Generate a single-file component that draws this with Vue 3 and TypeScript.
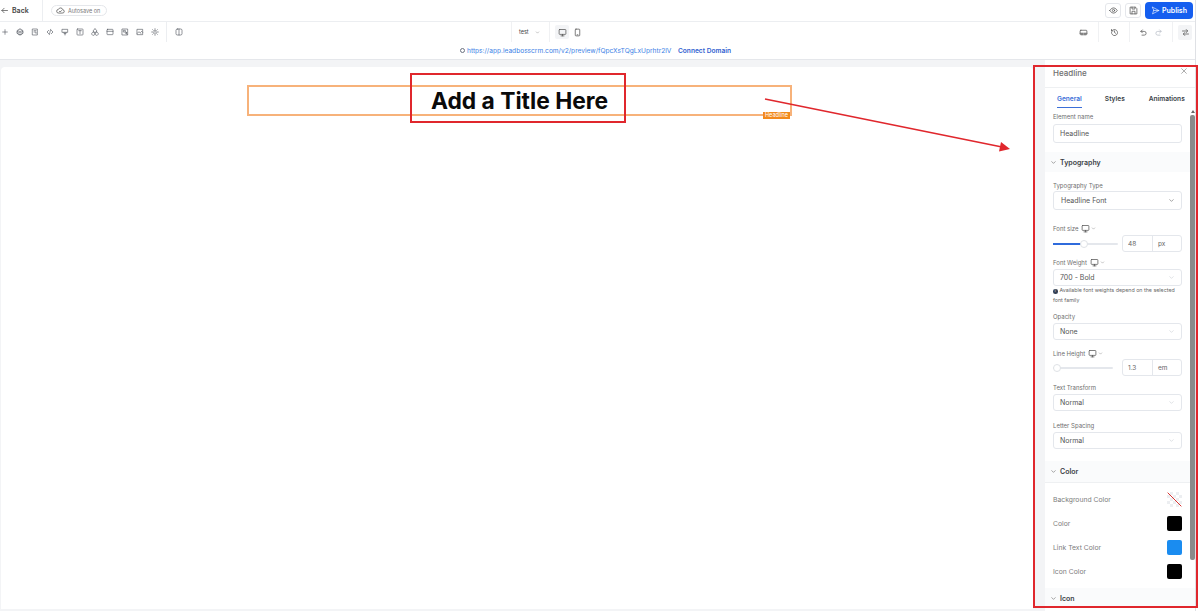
<script setup lang="ts">
interface Tool { paths: string[] }
const tools: Tool[] = [
  { paths: ['M12 5v14', 'M5 12h14'] },
  { paths: ['M12 3a9 9 0 1 0 .01 0', 'M3 10l9 5 9-5', 'M3 15l9 5 9-5', 'M5 7l7 4 7-4'] },
  { paths: ['M5 3h14v18H5z', 'M9 8h6', 'M9 12h6v4'] },
  { paths: ['M8 7l-5 5 5 5', 'M16 7l5 5-5 5', 'M14 4l-4 16'] },
  { paths: ['M4 4h16v9H4z', 'M9 13v4h6v-4', 'M12 17v4'] },
  { paths: ['M5 3h14a2 2 0 0 1 2 2v14a2 2 0 0 1-2 2H5a2 2 0 0 1-2-2V5a2 2 0 0 1 2-2z', 'M8 8h8', 'M12 8v9'] },
  { paths: ['M12 3a5 5 0 1 0 .01 0', 'M7 12a5 5 0 1 0 .01 0', 'M17 12a5 5 0 1 0 .01 0'] },
  { paths: ['M5 4h14a2 2 0 0 1 2 2v12a2 2 0 0 1-2 2H5a2 2 0 0 1-2-2V6a2 2 0 0 1 2-2z', 'M3 10h18'] },
  { paths: ['M4 3h16v18H4z', 'M8 7h5v5H8z', 'M14 15l4 4', 'M16 13a2 2 0 1 0 .01 0'] },
  { paths: ['M4 4h16v16H4z', 'M4 16l5-5 5 5', 'M14 13l3-3 3 3'] },
  { paths: ['M12 8a4 4 0 1 0 .01 0', 'M12 2v3', 'M12 19v3', 'M2 12h3', 'M19 12h3', 'M5 5l2 2', 'M17 17l2 2', 'M5 19l2-2', 'M17 7l2-2'] },
]
const swatches = [
  { label: 'Color', color: '#000000' },
  { label: 'Link Text Color', color: '#1a8cf0' },
  { label: 'Icon Color', color: '#000000' },
]
</script>

<template>
  <div class="app">
    <div class="main">
      <header class="topbar">
        <div class="back">
          <svg class="ic" viewBox="0 0 24 24"><path d="M20 12H5M11 6l-6 6 6 6" /></svg>
          <span>Back</span>
        </div>
        <div class="pill">
          <svg class="ic" viewBox="0 0 24 24"><path d="M7 19a5 5 0 0 1-.5-10A6 6 0 0 1 18 10a4.5 4.5 0 0 1-1 9z" /><path d="M9 14l2 2 4-4" /></svg>
          <span>Autosave on</span>
        </div>
        <div class="top-actions">
          <button class="sq"><svg class="ic" viewBox="0 0 24 24"><path d="M2 12s4-7 10-7 10 7 10 7-4 7-10 7-10-7-10-7z" /><circle cx="12" cy="12" r="3" /></svg></button>
          <button class="sq"><svg class="ic" viewBox="0 0 24 24"><path d="M4 3h13l4 4v14H4z" /><path d="M8 3v5h8V3" /><path d="M8 21v-7h8v7" /></svg></button>
          <button class="publish">
            <svg class="ic pub" viewBox="0 0 24 24"><path d="M4 3l17 9-17 9 3-9z" /><path d="M7 12h14" /></svg>
            <span>Publish</span>
          </button>
        </div>
      </header>

      <div class="toolbar">
        <div class="tools">
          <span v-for="(t, i) in tools" :key="i" class="tool">
            <svg class="ic" viewBox="0 0 24 24"><path v-for="p in t.paths" :key="p" :d="p" /></svg>
          </span>
          <span class="tool col">
            <svg class="ic" viewBox="0 0 24 24"><rect x="3" y="3" width="18" height="18" rx="4" /><path d="M12 3v18" /></svg>
          </span>
        </div>
        <div class="center">
          <div class="page-select">
            <span>test</span>
            <svg class="ic mini" viewBox="0 0 24 24"><path d="M6 9l6 6 6-6" /></svg>
          </div>
          <span class="device on"><svg class="ic" viewBox="0 0 24 24"><rect x="3" y="4" width="18" height="13" rx="1.5" /><path d="M8 21h8M12 17v4" /></svg></span>
          <span class="device"><svg class="ic" viewBox="0 0 24 24"><rect x="6" y="3" width="12" height="18" rx="2" /><path d="M11 18h2" /></svg></span>
        </div>
        <div class="right-tools">
          <span class="rt first"><svg class="ic" viewBox="0 0 24 24"><rect x="3" y="6" width="18" height="12" rx="2" /><path d="M3 14h18M8 18v-4M16 18v-4" /></svg></span>
          <span class="rt clock"><svg class="ic" viewBox="0 0 24 24"><path d="M4 12a8 8 0 1 0 3-6L4 8" /><path d="M4 4v4h4" /><path d="M12 8v4l3 2" /></svg></span>
          <span class="undo">
            <svg class="ic" viewBox="0 0 24 24"><path d="M9 5L5 9l4 4" /><path d="M5 9h9a5 5 0 0 1 0 10H8" /></svg>
            <svg class="ic faint" viewBox="0 0 24 24"><path d="M15 5l4 4-4 4" /><path d="M19 9h-9a5 5 0 0 0 0 10h6" /></svg>
          </span>
          <span class="swap"><svg class="ic" viewBox="0 0 24 24"><path d="M4 8h13M14 4l4 4-4 4" /><path d="M20 16H7M10 12l-4 4 4 4" /></svg></span>
        </div>
      </div>

      <div class="urlbar">
        <span class="ring"></span>
        <a class="link">https://app.leadbosscrm.com/v2/preview/fQpcXsTQgLxUprhtr2lV</a>
        <a class="connect">Connect Domain</a>
      </div>

      <div class="workspace">
        <section class="page">
          <div class="headline">
            <h1>Add a Title Here</h1>
            <span class="tag">Headline</span>
          </div>
        </section>

        <aside class="panel">
          <div class="panel-head">
            <span>Headline</span>
            <svg class="ic close" viewBox="0 0 24 24"><path d="M5 5l14 14M19 5L5 19" /></svg>
          </div>
          <nav class="tabs">
            <span class="tab active">General</span>
            <span class="tab">Styles</span>
            <span class="tab">Animations</span>
          </nav>

          <div class="body">
            <label class="lbl name-lbl">Element name</label>
            <div class="box name-box">Headline</div>

            <div class="sec typo-sec">
              <svg class="ic chev" viewBox="0 0 24 24"><path d="M6 9l6 6 6-6" /></svg>
              <span>Typography</span>
            </div>

            <label class="lbl t-type">Typography Type</label>
            <div class="box sel tall">
              <span class="in">Headline Font</span>
              <svg class="ic chev" viewBox="0 0 24 24"><path d="M6 9l6 6 6-6" /></svg>
            </div>

            <label class="lbl resp fs">Font size
              <svg class="ic" viewBox="0 0 24 24"><rect x="3" y="4" width="18" height="13" rx="1.5" /><path d="M8 21h8M12 17v4" /></svg>
              <svg class="ic mini" viewBox="0 0 24 24"><path d="M6 9l6 6 6-6" /></svg>
            </label>
            <div class="slider-row">
              <div class="track"><i class="fill"></i><i class="knob knob-fs"></i></div>
              <div class="num"><span>48</span><span>px</span></div>
            </div>

            <label class="lbl resp fw">Font Weight
              <svg class="ic" viewBox="0 0 24 24"><rect x="3" y="4" width="18" height="13" rx="1.5" /><path d="M8 21h8M12 17v4" /></svg>
              <svg class="ic mini" viewBox="0 0 24 24"><path d="M6 9l6 6 6-6" /></svg>
            </label>
            <div class="box sel"><span>700 - Bold</span><svg class="ic chev faint" viewBox="0 0 24 24"><path d="M6 9l6 6 6-6" /></svg></div>
            <p class="note"><i class="info">i</i>Available font weights depend on the selected font family</p>

            <label class="lbl op">Opacity</label>
            <div class="box sel"><span>None</span><svg class="ic chev faint" viewBox="0 0 24 24"><path d="M6 9l6 6 6-6" /></svg></div>

            <label class="lbl resp lh">Line Height
              <svg class="ic" viewBox="0 0 24 24"><rect x="3" y="4" width="18" height="13" rx="1.5" /><path d="M8 21h8M12 17v4" /></svg>
              <svg class="ic mini" viewBox="0 0 24 24"><path d="M6 9l6 6 6-6" /></svg>
            </label>
            <div class="slider-row tight">
              <div class="track short"><i class="knob"></i></div>
              <div class="num"><span>1.3</span><span>em</span></div>
            </div>

            <label class="lbl tt">Text Transform</label>
            <div class="box sel"><span>Normal</span><svg class="ic chev faint" viewBox="0 0 24 24"><path d="M6 9l6 6 6-6" /></svg></div>

            <label class="lbl ls">Letter Spacing</label>
            <div class="box sel"><span>Normal</span><svg class="ic chev faint" viewBox="0 0 24 24"><path d="M6 9l6 6 6-6" /></svg></div>

            <div class="sec color-sec">
              <svg class="ic chev" viewBox="0 0 24 24"><path d="M6 9l6 6 6-6" /></svg>
              <span>Color</span>
            </div>

            <div class="swatches">
              <div class="sw-row">
                <span>Background Color</span>
                <svg class="sw none" viewBox="0 0 15 15"><path d="M0 0l15 15" /></svg>
              </div>
              <div v-for="s in swatches" :key="s.label" class="sw-row">
                <span>{{ s.label }}</span>
                <i class="sw" :style="{ background: s.color }"></i>
              </div>
            </div>

            <div class="sec icon-sec">
              <svg class="ic chev" viewBox="0 0 24 24"><path d="M6 9l6 6 6-6" /></svg>
              <span>Icon</span>
            </div>
          </div>

          <div class="scrollbar"><b></b><i></i></div>
        </aside>
      </div>
    </div>

    <!-- annotations laid over the screenshot -->
    <div class="mark mark-title"></div>
    <div class="mark mark-panel"></div>
    <svg class="arrow" viewBox="0 0 1200 611">
      <path d="M765 99L1002 147" />
      <path class="head" d="M1010 149L999 151.500L1001 142z" />
    </svg>
  </div>
</template>

<style scoped>
.app {
  position: relative;
  width: 1200px;
  height: 611px;
  overflow: hidden;
  background: #fff;
  font-family: Inter, "Noto Sans", sans-serif;
  color: #444;
}
.main {
  width: 1195px;
  height: 611px;
  display: flex;
  flex-direction: column;
  background: #f3f4f6;
  border-right: 1px solid #dfe1e5;
  box-sizing: content-box;
}
.ic {
  width: 9px;
  height: 9px;
  fill: none;
  stroke: #555;
  stroke-width: 2;
  stroke-linecap: round;
  stroke-linejoin: round;
  flex: none;
}
.topbar {
  height: 22px;
  box-sizing: border-box;
  flex: none;
  display: flex;
  align-items: center;
  background: #fff;
  border-bottom: 1px solid #eceef1;
}
.back {
  width: 43px;
  height: 100%;
  box-sizing: border-box;
  display: flex;
  align-items: center;
  gap: 3px;
  font-size: 7px;
  font-weight: 600;
  border-right: 1px solid #eceef1;
}
.pill {
  margin-left: 8px;
  width: 56px;
  height: 11px;
  box-sizing: border-box;
  border: 1px solid #e5e7eb;
  border-radius: 6px;
  display: flex;
  align-items: center;
  gap: 3px;
  padding-left: 4px;
  font-size: 5.500px;
  color: #777;
}
.top-actions {
  margin-left: auto;
  margin-right: 2px;
  display: flex;
  align-items: center;
  gap: 4px;
}
.sq {
  width: 16px;
  height: 15px;
  padding: 0;
  background: #fff;
  border: 1px solid #e5e7eb;
  border-radius: 3px;
  display: flex;
  align-items: center;
  justify-content: center;
}
.publish {
  width: 48px;
  height: 17px;
  padding: 0;
  border: 0;
  border-radius: 4px;
  background: #155eef;
  color: #fff;
  font: 600 7px Inter, sans-serif;
  display: flex;
  align-items: center;
  justify-content: center;
  gap: 2px;
}
.pub { stroke: #fff; stroke-width: 1.600; }
.toolbar {
  height: 20px;
  flex: none;
  background: #fff;
  display: flex;
  align-items: center;
}
.tools {
  width: 511px;
  flex: none;
  display: flex;
  align-items: center;
  height: 100%;
}
.tool {
  width: 15px;
  height: 100%;
  display: flex;
  align-items: center;
  justify-content: center;
}
.tool:first-child { width: 9px; margin-right: 3px; }
.tool .ic { width: 8px; height: 8px; stroke-width: 1.800; stroke: #4a4f57; }
.tool.col {
  width: 24px;
  margin-left: 4px;
  border-left: 1px solid #eceef1;
}
.center { display: flex; align-items: center; height: 100%; }
.page-select {
  width: 39px;
  height: 100%;
  box-sizing: border-box;
  border-left: 1px solid #f0f1f3;
  border-right: 1px solid #f0f1f3;
  padding-left: 7px;
  display: flex;
  align-items: center;
  gap: 6px;
  font-size: 5.500px;
}
.mini { width: 5px; height: 5px; stroke: #777; }
.device {
  width: 14px;
  height: 14px;
  display: flex;
  align-items: center;
  justify-content: center;
  border-radius: 2px;
}
.device.on { margin-left: 5px; margin-right: 1px; background: #f3f4f6; }
.right-tools {
  margin-left: auto;
  height: 100%;
  display: flex;
  align-items: center;
  padding-right: 3px;
}
.rt {
  height: 100%;
  width: 30px;
  display: flex;
  align-items: center;
  justify-content: center;
  border-right: 1px solid #f0f1f3;
}
.undo {
  width: 42px;
  height: 100%;
  display: flex;
  align-items: center;
  justify-content: center;
  gap: 6px;
  border-right: 1px solid #f0f1f3;
}
.faint { stroke: #b8bec7; }
.swap {
  width: 14px;
  height: 15px;
  margin-left: 5px;
  background: #f3f4f6;
  border-radius: 2px;
  display: flex;
  align-items: center;
  justify-content: center;
}
.urlbar {
  height: 17px;
  flex: none;
  background: #fff;
  display: flex;
  align-items: center;
  padding-left: 460px;
  font-size: 6.600px;
  border-bottom: 1px solid #e5e7eb;
}
.ring {
  width: 3px;
  height: 3px;
  border: 1px solid #6b7280;
  border-radius: 50%;
  margin-right: 2px;
}
.link { color: #3b82e6; width: 211px; white-space: nowrap; }
.connect { color: #2f5fd0; font-weight: 600; white-space: nowrap; }
.workspace {
  flex: 1;
  min-height: 0;
  display: flex;
  padding: 7px 0 2px 1px;
}
.page {
  width: 1032px;
  background: #fff;
  border-radius: 4px 4px 0 0;
  padding: 18px 0 0 246px;
  box-sizing: border-box;
}
.headline {
  position: relative;
  width: 545px;
  height: 31px;
  box-sizing: border-box;
  border: 2px solid #f7b27a;
  display: flex;
  align-items: center;
  justify-content: center;
  padding-top: 1px;
}
h1 {
  margin: 0;
  font-size: 22.800px;
  font-weight: 700;
  color: #0a0a0a;
  line-height: 1;
}
.tag {
  position: absolute;
  right: 0;
  bottom: -5px;
  width: 27px;
  height: 7px;
  background: #f28a1c;
  color: #fff;
  font-size: 5.500px;
  line-height: 7px;
  text-align: center;
}
.panel {
  position: relative;
  width: 150px;
  margin-left: 12px;
  margin-top: -7px;
  margin-bottom: -2px;
  padding-top: 6px;
  background: #fff;
  flex: none;
  overflow: hidden;
}
.panel-head {
  height: 19px;
  display: flex;
  align-items: flex-start;
  justify-content: space-between;
  padding: 2px 7px 0 8px;
  font-size: 8px;
  font-weight: 500;
  color: #6e6e6e;
  border-bottom: 1px solid #eef0f2;
}
.close { width: 8px; height: 8px; stroke: #666; stroke-width: 1.600; margin-top: -1px; }
.tabs {
  height: 21px;
  display: flex;
  align-items: center;
  font-size: 6.600px;
  font-weight: 600;
  color: #3a3f46;
  padding-left: 12px;
}
.tab { position: relative; white-space: nowrap; }
.tab:nth-child(2) { margin-left: 23px; }
.tab:nth-child(3) { margin-left: 24px; }
.tab.active { color: #3b6fd8; }
.tab.active::after {
  content: "";
  position: absolute;
  left: 0;
  right: 0;
  bottom: -5px;
  height: 1px;
  background: #3b6fd8;
}
.body { padding: 0 13px 0 8px; }
.lbl {
  display: block;
  font-size: 6px;
  line-height: 8px;
  color: #6e6e6e;
  white-space: nowrap;
}
.name-lbl { margin-top: 4px; }
.box {
  box-sizing: border-box;
  height: 17px;
  border: 1px solid #e4e7ec;
  border-radius: 3px;
  display: flex;
  align-items: center;
  justify-content: space-between;
  padding: 0 6px;
  font-size: 7px;
  color: #555;
  background: #fff;
}
.name-box { height: 19px; margin-top: 3px; }
.sel { margin-top: 2px; }
.tall { height: 19px; margin-top: 1px; }
.in { padding-left: 1px; }
.chev { width: 7px; height: 7px; stroke: #555; stroke-width: 1.800; }
.chev.faint { stroke: #c3c8d0; }
.sec {
  margin: 9px -13px 0 -8px;
  padding-left: 5px;
  height: 20px;
  display: flex;
  align-items: center;
  gap: 3px;
  font-size: 7px;
  font-weight: 600;
  color: #3a3f46;
  background: #fafbfc;
}
.t-type { margin-top: 10px; }
.resp {
  display: flex;
  align-items: center;
  gap: 3px;
}
.resp .mini { margin-left: -2px; }
.fs { margin-top: 14px; }
.slider-row {
  display: flex;
  align-items: center;
  justify-content: space-between;
  margin-top: 2px;
}
.slider-row.tight { margin-top: 1px; }
.track {
  position: relative;
  width: 65px;
  height: 2px;
  background: #e4e7ec;
  border-radius: 1px;
}
.track.short { width: 60px; }
.fill {
  position: absolute;
  left: 0;
  top: 0;
  width: 28px;
  height: 2px;
  background: #2f6bdc;
}
.knob {
  position: absolute;
  left: 0;
  top: -3px;
  width: 8px;
  height: 8px;
  box-sizing: border-box;
  background: #fff;
  border: 1px solid #dfe2e6;
  border-radius: 50%;
}
.knob-fs { left: 27px; }
.num {
  width: 60px;
  height: 17px;
  box-sizing: border-box;
  border: 1px solid #e4e7ec;
  border-radius: 3px;
  display: flex;
  align-items: center;
  font-size: 6.500px;
  color: #666;
}
.num span:first-child {
  width: 30px;
  height: 100%;
  display: flex;
  align-items: center;
  padding-left: 5px;
  box-sizing: border-box;
  border-right: 1px solid #e4e7ec;
}
.num span:last-child { padding-left: 5px; }
.fw { margin-top: 6px; }
.note {
  margin: -1px 0 0;
  font-size: 5.300px;
  line-height: 10px;
  color: #666;
  width: 130px;
}
.info {
  display: inline-block;
  width: 4.500px;
  height: 4.500px;
  margin-right: 2px;
  background: #344054;
  color: #fff;
  border-radius: 50%;
  font-size: 3.500px;
  line-height: 4.500px;
  text-align: center;
  font-style: normal;
}
.op { margin-top: 8px; }
.lh { margin-top: 9px; }
.tt { margin-top: 8px; }
.ls { margin-top: 11px; }
.color-sec {
  margin-top: 12px;
  height: 21px;
  border-bottom: 1px solid #eef0f2;
}
.swatches { padding-top: 4px; }
.sw-row {
  height: 24px;
  display: flex;
  align-items: center;
  justify-content: space-between;
  font-size: 6.800px;
  color: #7d7d7d;
}
.sw {
  display: block;
  width: 15px;
  height: 15px;
  border-radius: 2px;
}
.none {
  background: repeating-conic-gradient(#eceef1 0 25%, #fff 0 50%) 0 0 / 6px 6px;
}
.none path { stroke: #d8322f; stroke-width: 1; fill: none; }
.icon-sec { margin-top: 5px; }
.scrollbar {
  position: absolute;
  right: 0;
  top: 50px;
  bottom: 0;
  width: 5px;
}
.scrollbar b {
  position: absolute;
  top: 0;
  left: 1px;
  width: 0;
  height: 0;
  border-left: 2px solid transparent;
  border-right: 2px solid transparent;
  border-bottom: 3px solid #666;
}
.scrollbar i {
  position: absolute;
  top: 5px;
  left: 0;
  width: 5px;
  height: 445px;
  border-radius: 2px;
  background: #8a8a8a;
}
.mark {
  position: absolute;
  box-sizing: border-box;
  border: 2px solid #e0272d;
  pointer-events: none;
}
.mark-title { left: 410px; top: 73px; width: 216px; height: 50px; }
.mark-panel { left: 1033px; top: 65px; width: 165px; height: 543px; }
.arrow {
  position: absolute;
  left: 0;
  top: 0;
  width: 1200px;
  height: 611px;
  pointer-events: none;
}
.arrow path { stroke: #e0272d; stroke-width: 1.500; fill: none; }
.arrow .head { fill: #e0272d; stroke: none; }
</style>

<style>
html, body { margin: 0; background: #fff; }
</style>
